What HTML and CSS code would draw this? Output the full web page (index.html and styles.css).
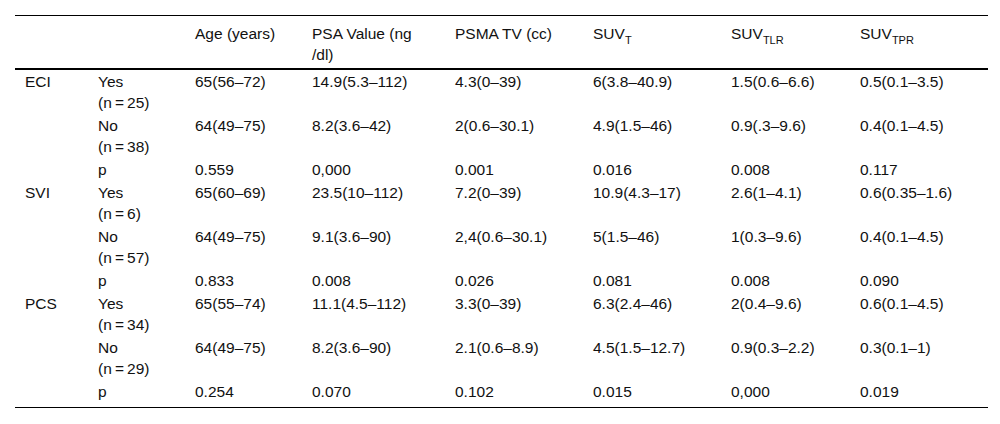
FILE: index.html
```html
<!DOCTYPE html>
<html>
<head>
<meta charset="utf-8">
<link rel="stylesheet" href="styles.css">
</head>
<body>
<div class="wrap">
<table class="data">
<colgroup>
<col class="c1"><col class="c2"><col class="c3"><col class="c4"><col class="c5"><col class="c6"><col class="c7"><col class="c8">
</colgroup>
<thead>
<tr>
<th></th><th></th><th>Age (years)</th><th>PSA Value (ng<br>/dl)</th><th>PSMA TV (cc)</th><th>SUV<sub>T</sub></th><th>SUV<sub>TLR</sub></th><th>SUV<sub>TPR</sub></th>
</tr>
</thead>
<tbody>
<tr><td>ECI</td><td>Yes<br>(n&thinsp;=&thinsp;25)</td><td>65(56–72)</td><td>14.9(5.3–112)</td><td>4.3(0–39)</td><td>6(3.8–40.9)</td><td>1.5(0.6–6.6)</td><td>0.5(0.1–3.5)</td></tr>
<tr><td></td><td>No<br>(n&thinsp;=&thinsp;38)</td><td>64(49–75)</td><td>8.2(3.6–42)</td><td>2(0.6–30.1)</td><td>4.9(1.5–46)</td><td>0.9(.3–9.6)</td><td>0.4(0.1–4.5)</td></tr>
<tr><td></td><td>p</td><td>0.559</td><td>0,000</td><td>0.001</td><td>0.016</td><td>0.008</td><td>0.117</td></tr>
<tr><td>SVI</td><td>Yes<br>(n&thinsp;=&thinsp;6)</td><td>65(60–69)</td><td>23.5(10–112)</td><td>7.2(0–39)</td><td>10.9(4.3–17)</td><td>2.6(1–4.1)</td><td>0.6(0.35–1.6)</td></tr>
<tr><td></td><td>No<br>(n&thinsp;=&thinsp;57)</td><td>64(49–75)</td><td>9.1(3.6–90)</td><td>2,4(0.6–30.1)</td><td>5(1.5–46)</td><td>1(0.3–9.6)</td><td>0.4(0.1–4.5)</td></tr>
<tr><td></td><td>p</td><td>0.833</td><td>0.008</td><td>0.026</td><td>0.081</td><td>0.008</td><td>0.090</td></tr>
<tr><td>PCS</td><td>Yes<br>(n&thinsp;=&thinsp;34)</td><td>65(55–74)</td><td>11.1(4.5–112)</td><td>3.3(0–39)</td><td>6.3(2.4–46)</td><td>2(0.4–9.6)</td><td>0.6(0.1–4.5)</td></tr>
<tr><td></td><td>No<br>(n&thinsp;=&thinsp;29)</td><td>64(49–75)</td><td>8.2(3.6–90)</td><td>2.1(0.6–8.9)</td><td>4.5(1.5–12.7)</td><td>0.9(0.3–2.2)</td><td>0.3(0.1–1)</td></tr>
<tr class="last"><td></td><td>p</td><td>0.254</td><td>0.070</td><td>0.102</td><td>0.015</td><td>0,000</td><td>0.019</td></tr>
</tbody>
</table>
</div>
</body>
</html>
```

FILE: styles.css
```css
html, body {
  margin: 0;
  padding: 0;
  background: #ffffff;
}

.wrap {
  padding: 15px 12px 0 15px;
}

.data {
  width: 973px;
  border-collapse: collapse;
  table-layout: fixed;
  font-family: "Liberation Sans", Arial, sans-serif;
  font-size: 15.5px;
  line-height: 21px;
  color: #111111;
}

.c1 { width: 73px; }
.c2 { width: 97px; }
.c3 { width: 117px; }
.c4 { width: 143px; }
.c5 { width: 138px; }
.c6 { width: 138px; }
.c7 { width: 129px; }
.c8 { width: 138px; }

.data thead tr {
  border-top: 1px solid #000;
  border-bottom: 2px solid #000;
}

.data th {
  font-weight: normal;
  text-align: left;
  vertical-align: top;
  padding: 7px 10px 3px 10px;
  height: 42px;
}

.data td {
  text-align: left;
  vertical-align: top;
  padding: 1px 10px 1px 10px;
}

.data tr.last {
  border-bottom: 1px solid #000;
}

.data tr.last td {
  padding-bottom: 5px;
}

.data sub {
  font-size: 11px;
  line-height: 0;
  vertical-align: -5px;
}
```
